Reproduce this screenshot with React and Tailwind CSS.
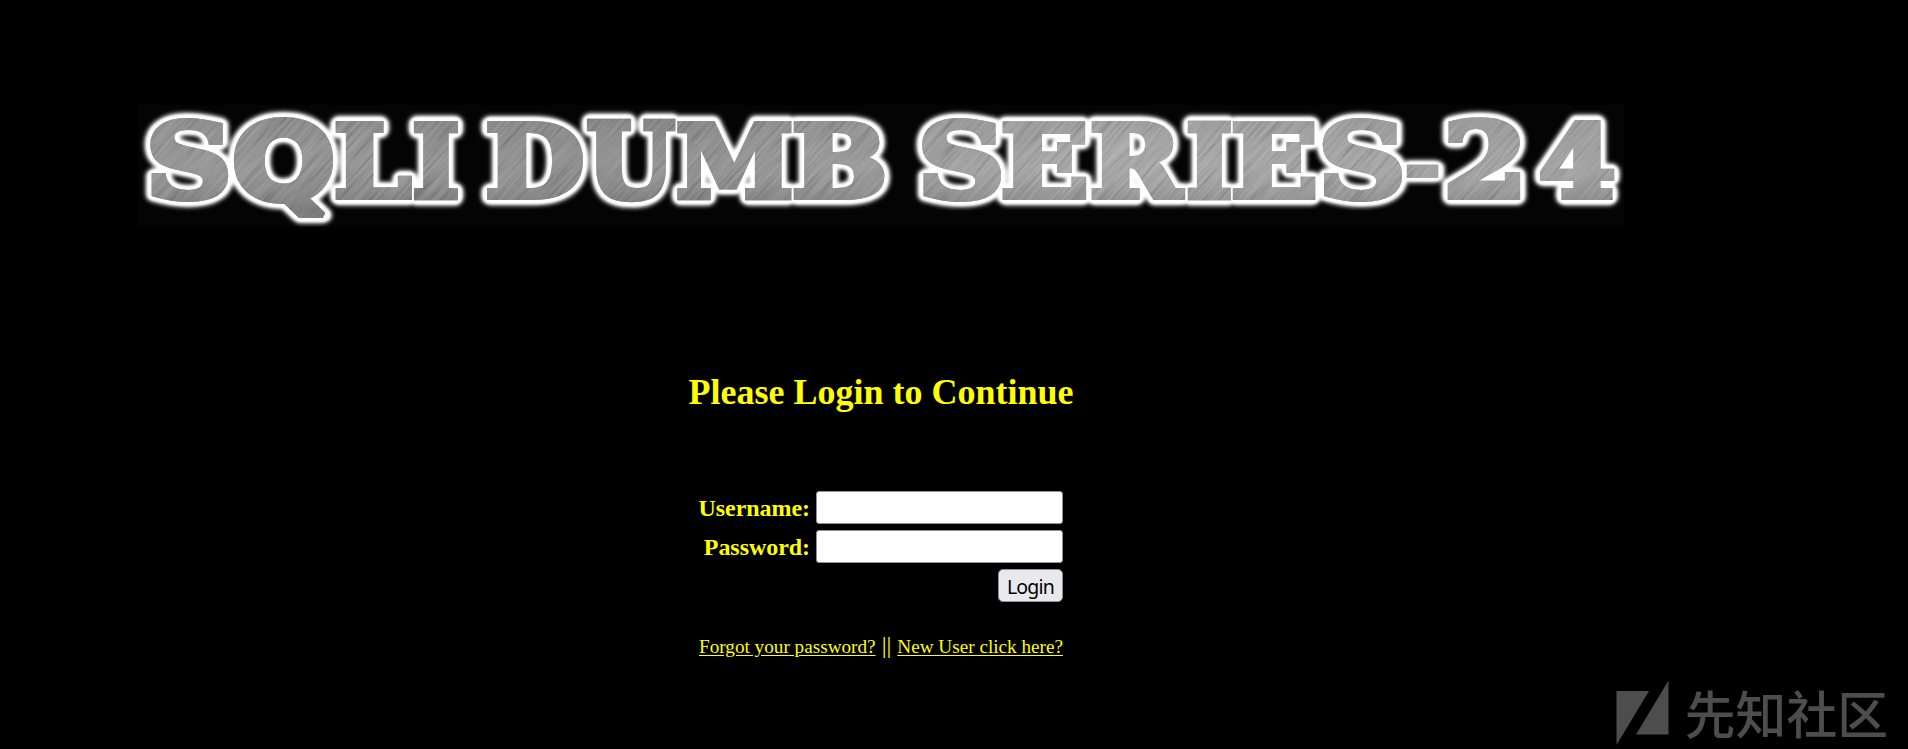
import React from "react";

const SLAB = '"DejaVu Serif", serif';
const ROUND = '"DejaVu Sans", sans-serif';
const SIZE = 104;

// Ink box of every banner letter: [character, left, right, top, bottom]
const LETTERS = [
  ["S", 11.5, 90, 12, 97.5],
  ["Q", 96, 196, 11.5, 114],
  ["L", 197, 274, 14.5, 95],
  ["I", 275, 320, 14.5, 95],
  ["D", 348.5, 445, 14.5, 95],
  ["U", 448.5, 538, 14.5, 97.5],
  ["M", 539, 654, 14.5, 95],
  ["B", 655, 747, 14.5, 95],
  ["S", 783.5, 863, 12, 97.5],
  ["E", 864, 948, 14.5, 95],
  ["R", 953, 1048, 14.5, 95],
  ["I", 1049, 1093, 14.5, 95],
  ["E", 1094, 1177, 14.5, 95],
  ["S", 1184, 1264, 12, 97.5],
  ["-", 1269, 1300, 59, 73],
  ["2", 1309, 1383, 12, 95],
  ["4", 1402, 1477, 14.5, 95],
];

const WEIGHT = 6.5;

function fitLetters() {
  const ctx = document.createElement("canvas").getContext("2d");
  const inset = WEIGHT / 2;
  return LETTERS.map(([ch, left, right, top, bottom]) => {
    const font = ch === "Q" ? ROUND : SLAB;
    ctx.font = `bold ${SIZE}px ${font}`;
    const m = ctx.measureText(ch);
    const inkLeft = -m.actualBoundingBoxLeft;
    const inkTop = -m.actualBoundingBoxAscent;
    const sx = (right - left - 2 * inset) / (m.actualBoundingBoxRight - inkLeft);
    const sy = (bottom - top - 2 * inset) / (m.actualBoundingBoxDescent - inkTop);
    const tx = left + inset - inkLeft * sx;
    const ty = top + inset - inkTop * sy;
    // strokes shrink with the glyph, so widen them by the mean scale
    return { ch, font, unit: 1 / Math.sqrt(sx * sy), transform: `translate(${tx} ${ty}) scale(${sx} ${sy})` };
  });
}

function Letter({ item, color, width, join = "round" }) {
  return (
    <text
      transform={item.transform}
      fontFamily={item.font}
      fontWeight="bold"
      fontSize={SIZE}
      fill={color}
      stroke={color}
      strokeWidth={width * item.unit}
      strokeLinejoin={join}
      strokeMiterlimit="2"
    >
      {item.ch}
    </text>
  );
}

function Banner() {
  const items = fitLetters();
  return (
    <svg className="block h-[122px] w-[1486px] overflow-visible bg-[#040404]" viewBox="0 0 1486 122">
      <defs>
        <filter id="halo" x="0" y="0" width="1486" height="122" filterUnits="userSpaceOnUse">
          <feGaussianBlur stdDeviation="1.9" />
        </filter>
        <filter id="soft" x="0" y="0" width="1486" height="122" filterUnits="userSpaceOnUse">
          <feGaussianBlur stdDeviation="0.8" />
        </filter>
        <filter id="brushed" x="0" y="0" width="100%" height="100%">
          <feTurbulence type="fractalNoise" baseFrequency="0.018 0.35" numOctaves="3" seed="4" />
          <feColorMatrix values="1.6 0 0 0 -0.3  1.6 0 0 0 -0.3  1.6 0 0 0 -0.3  0 0 0 0 1" />
        </filter>
        <linearGradient id="sheen" x1="0" x2="1486" y1="0" y2="0" gradientUnits="userSpaceOnUse">
          <stop offset="0" stopColor="#8a8a8a" />
          <stop offset="0.35" stopColor="#7e7e7e" />
          <stop offset="0.5" stopColor="#949494" />
          <stop offset="0.65" stopColor="#a8a8a8" />
          <stop offset="1" stopColor="#9c9c9c" />
        </linearGradient>
        <linearGradient id="shade" x1="0" x2="0" y1="0" y2="1">
          <stop offset="0" stopColor="#000" stopOpacity="0.08" />
          <stop offset="0.45" stopColor="#fff" stopOpacity="0.05" />
          <stop offset="0.85" stopColor="#000" stopOpacity="0.18" />
        </linearGradient>
        <mask id="face" maskUnits="userSpaceOnUse" x="0" y="0" width="1486" height="122">
          {items.map((item, i) => (
            <Letter key={i} item={item} color="#fff" width={WEIGHT} join="miter" />
          ))}
        </mask>
      </defs>
      <g filter="url(#halo)">
        {items.map((item, i) => (
          <Letter key={i} item={item} color="#fff" width={WEIGHT + 11} />
        ))}
      </g>
      <g filter="url(#soft)">
        {items.map((item, i) => (
          <Letter key={i} item={item} color="#fff" width={WEIGHT + 7.5} />
        ))}
      </g>
      {items.map((item, i) => (
        <g key={i}>
          <Letter item={item} color="#fff" width={WEIGHT + 2.4} />
          <Letter item={item} color="#8e8e8e" width={WEIGHT} join="miter" />
        </g>
      ))}
      <g mask="url(#face)">
        <rect width="1486" height="122" fill="url(#sheen)" opacity="0.7" />
        <rect width="1486" height="122" fill="url(#shade)" />
        <g opacity="0.16">
          <g transform="rotate(-48 743 61)">
            <rect x="0" y="-700" width="1486" height="1522" filter="url(#brushed)" />
          </g>
        </g>
      </g>
    </svg>
  );
}

function Field({ label, type }) {
  return (
    <label className="flex h-[33px] items-center justify-end gap-[6px]">
      <span className="text-[24px] font-bold leading-none tracking-[-0.05px]">{label}</span>
      <input
        type={type}
        className="h-[33px] w-[247px] shrink-0 rounded-[3px] border border-[#8f8f9d] bg-white px-1 text-black outline-none"
      />
    </label>
  );
}

function Watermark() {
  return (
    <div className="absolute right-[20px] bottom-0 flex h-[72px] items-start gap-[16px] text-[#4d4d4d]">
      <svg className="mt-[2px] h-[66px] w-[53px]" viewBox="0 0 53 66" fill="currentColor">
        <path d="M0.5 12H33L0.5 66Z" />
        <path d="M52.5 1.5V55.5H20Z" />
      </svg>
      <span className="whitespace-nowrap font-['Noto_Sans_CJK_SC',sans-serif] text-[50.8px] font-medium leading-[70px]">
        先知社区
      </span>
    </div>
  );
}

export default function App() {
  return (
    <main className="relative h-[749px] w-full overflow-hidden bg-black font-['Liberation_Serif',serif] text-[#ffff00]">
      <div className="flex w-[1762px] flex-col items-center pt-[105px]">
        <Banner />
        <h1 className="mt-[145px] text-[36px] font-bold leading-[41px]">Please Login to Continue</h1>
        <form className="mt-[78px] flex w-[364px] flex-col gap-[6px]" onSubmit={(e) => e.preventDefault()}>
          <Field label="Username:" type="text" />
          <Field label="Password:" type="password" />
          <button className="h-[33px] w-[65px] self-end rounded-[5px] border border-[#8f8f9d] bg-[#e9e9ed] pt-[2px] font-['Noto_Sans',sans-serif] text-[19.5px] leading-none tracking-[-0.8px] text-black">
            Login
          </button>
        </form>
        <div className="mt-[29px] flex w-[364px] items-baseline justify-between whitespace-nowrap text-[19.2px] leading-[28px]">
          <a href="#forgot" className="underline underline-offset-2">Forgot your password?</a>
          <span className="text-[24px]">||</span>
          <a href="#new" className="underline underline-offset-2">New User click here?</a>
        </div>
      </div>
      <Watermark />
    </main>
  );
}
